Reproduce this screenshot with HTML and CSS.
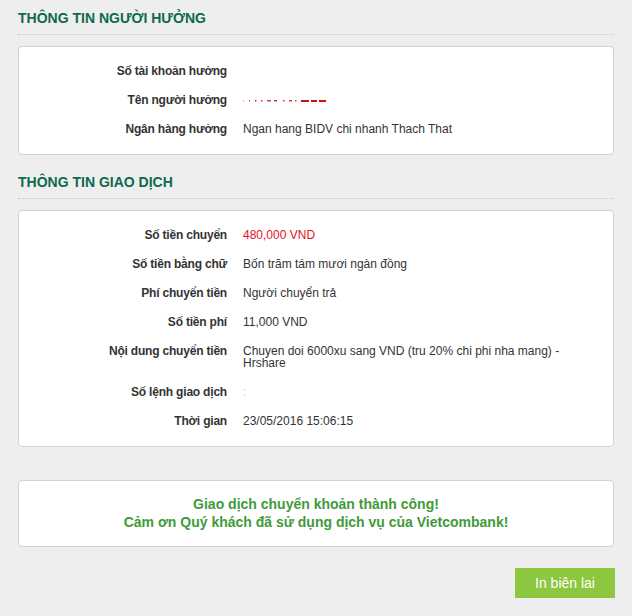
FILE: index.html
```html
<!DOCTYPE html>
<html lang="vi">
<head>
<meta charset="utf-8">
<title>Vietcombank</title>
<link rel="stylesheet" href="styles.css">
</head>
<body>
<div class="page">
  <h2 class="section-title">THÔNG TIN NGƯỜI HƯỞNG</h2>
  <div class="card">
    <div class="row"><div class="label">Số tài khoản hưởng</div><div class="value"></div></div>
    <div class="row"><div class="label">Tên người hưởng</div><div class="value">
      <svg class="masked" width="84" height="4" viewBox="0 0 84 4">
        <rect x="0" y="1" width="1" height="1.5" fill="#d99"/>
        <rect x="6" y="1" width="1" height="1.5" fill="#c33"/>
        <rect x="12" y="1" width="1.5" height="1.5" fill="#c33"/>
        <rect x="18" y="1" width="1.5" height="1.5" fill="#c33"/>
        <rect x="24" y="1" width="4" height="1.5" fill="#c44"/>
        <rect x="31" y="1" width="3" height="1.5" fill="#c33"/>
        <rect x="40" y="1" width="1.5" height="1.5" fill="#c33"/>
        <rect x="46" y="1" width="3" height="1.5" fill="#c44"/>
        <rect x="52" y="1" width="1.5" height="1.5" fill="#c33"/>
        <rect x="58" y="1" width="8" height="2" fill="#c11"/>
        <rect x="68" y="1" width="6" height="2" fill="#c11"/>
        <rect x="76" y="1" width="7" height="2" fill="#c11"/>
      </svg>
    </div></div>
    <div class="row"><div class="label">Ngân hàng hưởng</div><div class="value">Ngan hang BIDV chi nhanh Thach That</div></div>
  </div>

  <h2 class="section-title">THÔNG TIN GIAO DỊCH</h2>
  <div class="card">
    <div class="row"><div class="label">Số tiền chuyển</div><div class="value red">480,000 VND</div></div>
    <div class="row"><div class="label">Số tiền bằng chữ</div><div class="value">Bốn trăm tám mươi ngàn đồng</div></div>
    <div class="row"><div class="label">Phí chuyển tiền</div><div class="value">Người chuyển trả</div></div>
    <div class="row"><div class="label">Số tiền phí</div><div class="value">11,000 VND</div></div>
    <div class="row"><div class="label">Nội dung chuyển tiền</div><div class="value">Chuyen doi 6000xu sang VND (tru 20% chi phi nha mang) - Hrshare</div></div>
    <div class="row"><div class="label">Số lệnh giao dịch</div><div class="value faint">:</div></div>
    <div class="row"><div class="label">Thời gian</div><div class="value">23/05/2016 15:06:15</div></div>
  </div>

  <div class="card message">
    <p>Giao dịch chuyển khoản thành công!</p>
    <p>Cảm ơn Quý khách đã sử dụng dịch vụ của Vietcombank!</p>
  </div>

  <div class="actions">
    <button class="btn" type="button">In biên lai</button>
  </div>
</div>
</body>
</html>
```

FILE: styles.css
```css
html, body {
  margin: 0;
  padding: 0;
  background: #eeeeee;
}

body {
  font-family: "Liberation Sans", Arial, sans-serif;
  color: #333333;
}

.page {
  padding: 0 18px 0 18px;
}

.section-title {
  margin: 0;
  padding: 10px 0 8px 0;
  font-size: 14px;
  line-height: 16px;
  font-weight: bold;
  color: #0d6a4e;
  border-bottom: 1px dotted #c8c8c8;
}

.card {
  background: #ffffff;
  border: 1px solid #d2d2d2;
  border-radius: 4px;
  margin-top: 11px;
  margin-bottom: 9px;
  padding: 10px 0;
}

.row {
  display: flex;
  padding: 8px 0 9px 0;
  font-size: 12px;
  line-height: 12px;
}

.label {
  width: 208px;
  flex: none;
  text-align: right;
  font-weight: bold;
  letter-spacing: -0.2px;
  color: #333333;
}

.value {
  margin-left: 16px;
  width: 345px;
  color: #333333;
  min-height: 12px;
}

.value.red {
  color: #e0141e;
}

.value.faint {
  color: #f0c070;
}

.masked {
  display: block;
  margin-top: 5px;
}

.message {
  margin-top: 33px;
  padding: 14px 0 15px 0;
  text-align: center;
}

.message p {
  margin: 0;
  font-size: 14px;
  line-height: 18px;
  font-weight: bold;
  color: #3f9a3a;
}

.actions {
  display: flex;
  justify-content: flex-end;
  margin-top: 21px;
}

.btn {
  width: 100px;
  height: 30px;
  border: none;
  border-radius: 0;
  background: #8dc63f;
  color: #ffffff;
  font-family: "Liberation Sans", Arial, sans-serif;
  font-size: 14px;
  padding: 0;
  margin-right: -1px;
}
```
